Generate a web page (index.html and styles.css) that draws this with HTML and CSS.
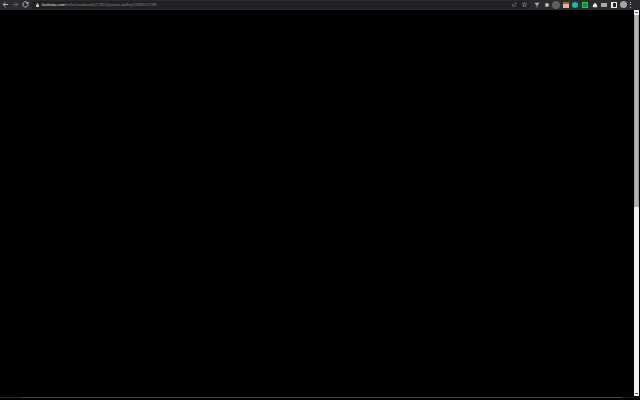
FILE: index.html
```html
<!DOCTYPE html>
<html lang="en">
<head>
    <meta charset="UTF-8">
    <title>Browser</title>
    <link rel="stylesheet" href="styles.css">
</head>
<body>
    <div class="toolbar">
        <div class="nav">
            <svg class="nav-icon" viewBox="0 0 8 8"><path d="M7 4H1.500M4 1.300 1.300 4 4 6.700" fill="none" stroke="#c4c5c7" stroke-width="1"/></svg>
            <svg class="nav-icon" viewBox="0 0 8 8"><path d="M1 4h5.500M4 1.300 6.700 4 4 6.700" fill="none" stroke="#6d6e70" stroke-width="1"/></svg>
            <svg class="nav-icon" viewBox="0 0 8 8"><path d="M6.600 2.400A3 3 0 1 0 7 4M7 1v2H5" fill="none" stroke="#c4c5c7" stroke-width="1"/></svg>
        </div>
        <div class="address">
            <svg class="lock" viewBox="0 0 4 5"><path d="M0 2h4v3H0zM1 2V1a1 1 0 0 1 2 0v1" fill="#c4c5c7"/></svg>
            <span class="url"><span class="host">fashstar.com</span>/in/hc/notebook/j1T3DQ/james-bolley/1268107138</span>
            <div class="address-actions">
                <svg class="small-icon" viewBox="0 0 7 7"><path d="M1 3v3h4V5M3 4.500c0-1.500 1-2.500 3-2.500M4.500 .5 6 2 4.500 3.500" fill="none" stroke="#8a8b8d" stroke-width=".8"/></svg>
                <svg class="small-icon" viewBox="0 0 7 7"><path d="M3.500.5 4.400 2.600 6.600 2.800 4.900 4.300 5.400 6.500 3.500 5.300 1.600 6.500 2.100 4.300.4 2.800 2.600 2.600z" fill="none" stroke="#a5a6a8" stroke-width=".8"/></svg>
            </div>
        </div>
        <div class="extensions">
            <svg class="ext" viewBox="0 0 7 7"><path d="M.5 1h6L4 4v2.500L3 6V4z" fill="#a9aaac"/></svg>
            <svg class="ext" viewBox="0 0 7 7"><circle cx="3.500" cy="3.500" r="2.300" fill="#b9babc"/></svg>
            <span class="ext circle-gray"></span>
            <span class="ext face"></span>
            <span class="ext circle-teal"></span>
            <span class="ext square-green"></span>
            <svg class="ext" viewBox="0 0 7 7"><path d="M3.500 1 6 3.500V6H1V3.500z" fill="#e4e4e4"/></svg>
            <span class="ext chip"></span>
            <span class="ext panel"></span>
            <span class="ext avatar"></span>
            <span class="ext menu"><i></i><i></i><i></i></span>
        </div>
    </div>
    <div class="page">
        <div class="content"></div>
        <div class="scrollbar">
            <div class="arrow-cell"><div class="arrow"></div></div>
            <div class="thumb"></div>
            <div class="arrow-cell bottom-cell"><div class="arrow"></div></div>
        </div>
    </div>
    <div class="bottom">
        <div class="bottom-left"></div>
        <div class="bottom-line"></div>
        <div class="bottom-right"></div>
    </div>
</body>
</html>
```

FILE: styles.css
```css
* {
    margin: 0;
    padding: 0;
    box-sizing: border-box;
}

body {
    width: 640px;
    height: 400px;
    background: #000;
    display: flex;
    flex-direction: column;
    overflow: hidden;
    font-family: "Liberation Sans", sans-serif;
}

.toolbar {
    height: 10px;
    background: #2a2b2e;
    display: flex;
    align-items: center;
    padding: 0 0 1px 2px;
}

.nav {
    display: flex;
    gap: 3px;
    width: 29px;
}

.nav-icon {
    width: 7px;
    height: 7px;
}

.address {
    width: 499px;
    height: 8px;
    background: #1f2023;
    border-radius: 4px;
    display: flex;
    align-items: center;
    padding: 0 3px 0 5px;
}

.lock {
    width: 3px;
    height: 4px;
    margin-right: 3px;
}

.url {
    font-size: 4.100px;
    color: #85868a;
    white-space: nowrap;
}

.host {
    color: #e2e3e5;
}

.address-actions {
    display: flex;
    gap: 5px;
    margin-left: auto;
}

.small-icon {
    width: 5px;
    height: 5px;
}

.extensions {
    flex: 1;
    display: flex;
    align-items: center;
    gap: 3.600px;
    padding-left: 4px;
}

.ext {
    width: 6px;
    height: 6px;
    display: block;
    flex-shrink: 0;
}

.circle-gray {
    background: #5e5f61;
    border-radius: 50%;
    width: 8px;
    height: 8px;
    margin: 0 -1px;
}

.face {
    background: linear-gradient(#8a6a4a 40%, #e0b48c 40%);
}

.circle-teal {
    background: #19b9a5;
    border-radius: 50%;
}

.square-green {
    background: #1b8f35;
    border: 1px solid #2ac24c;
}

.chip {
    background: #a8a9ab;
    height: 4px;
}

.panel {
    background: #2a2b2e;
    border: 1px solid #e6e6e6;
    border-left-width: 2px;
}

.avatar {
    background: #a5a5a5;
    border-radius: 50%;
    width: 7px;
    height: 7px;
    margin: 0 -0.500px;
}

.menu {
    width: 2px;
    display: flex;
    flex-direction: column;
    align-items: center;
    justify-content: space-between;
}

.menu i {
    width: 1px;
    height: 1px;
    background: #c4c5c7;
}

.page {
    flex: 1;
    display: flex;
    min-height: 0;
}

.content {
    flex: 1;
    background: #000;
}

.scrollbar {
    width: 6px;
    background: #f1f1f1;
    border-right: 1px solid #000;
    display: flex;
    flex-direction: column;
}

.arrow-cell {
    height: 5px;
    display: flex;
    align-items: center;
    justify-content: center;
}

.bottom-cell {
    margin-top: auto;
}

.thumb {
    height: 192px;
    background: linear-gradient(90deg, #8f8f8f, #b4b4b4 30%, #b4b4b4 70%, #8f8f8f);
}

.arrow {
    width: 3px;
    height: 1px;
    background: #555;
}

.bottom {
    height: 4px;
    background: #000;
    display: flex;
    padding-top: 1px;
}

.bottom > div {
    height: 1px;
}

.bottom-left {
    width: 22px;
    background: #2a2a2a;
}

.bottom-line {
    flex: 1;
    background: #0f5680;
}

.bottom-right {
    width: 18px;
    background: #1a1a1a;
}
```
